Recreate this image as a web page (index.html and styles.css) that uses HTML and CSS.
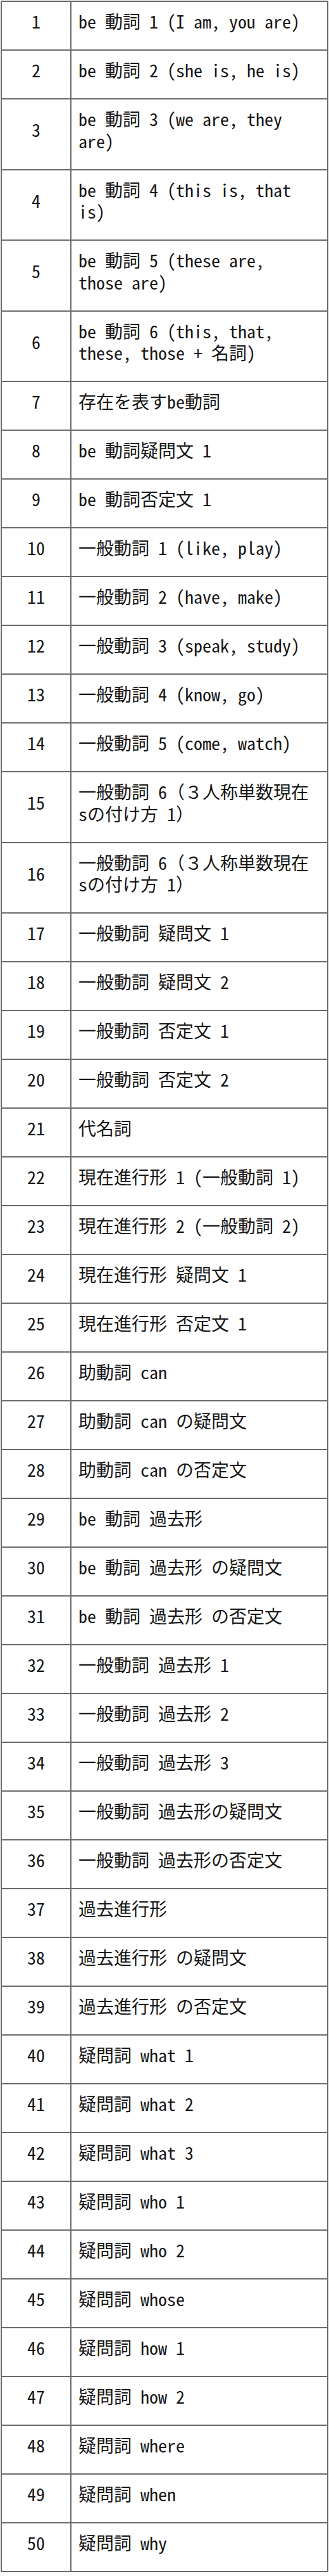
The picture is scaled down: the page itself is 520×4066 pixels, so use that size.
FILE: index.html
```html
<!DOCTYPE html>
<html lang="ja">
<head>
<meta charset="utf-8">
<title>中学英語 文法一覧</title>
<link rel="stylesheet" href="styles.css">
</head>
<body>
<div class="lessons">
  <div class="num">1</div><div class="title">be 動詞 1 (I am, you are)</div>
  <div class="num">2</div><div class="title">be 動詞 2 (she is, he is)</div>
  <div class="num">3</div><div class="title">be 動詞 3 (we are, they are)</div>
  <div class="num">4</div><div class="title">be 動詞 4 (this is, that is)</div>
  <div class="num">5</div><div class="title">be 動詞 5 (these are, those are)</div>
  <div class="num">6</div><div class="title">be 動詞 6 (this, that, these, those + 名詞)</div>
  <div class="num">7</div><div class="title">存在を表すbe動詞</div>
  <div class="num">8</div><div class="title">be 動詞疑問文 1</div>
  <div class="num">9</div><div class="title">be 動詞否定文 1</div>
  <div class="num">10</div><div class="title">一般動詞 1 (like, play)</div>
  <div class="num">11</div><div class="title">一般動詞 2 (have, make)</div>
  <div class="num">12</div><div class="title">一般動詞 3 (speak, study)</div>
  <div class="num">13</div><div class="title">一般動詞 4 (know, go)</div>
  <div class="num">14</div><div class="title">一般動詞 5 (come, watch)</div>
  <div class="num">15</div><div class="title">一般動詞 6（３人称単数現在sの付け方 1）</div>
  <div class="num">16</div><div class="title">一般動詞 6（３人称単数現在sの付け方 1）</div>
  <div class="num">17</div><div class="title">一般動詞 疑問文 1</div>
  <div class="num">18</div><div class="title">一般動詞 疑問文 2</div>
  <div class="num">19</div><div class="title">一般動詞 否定文 1</div>
  <div class="num">20</div><div class="title">一般動詞 否定文 2</div>
  <div class="num">21</div><div class="title">代名詞</div>
  <div class="num">22</div><div class="title">現在進行形 1 (一般動詞 1)</div>
  <div class="num">23</div><div class="title">現在進行形 2 (一般動詞 2)</div>
  <div class="num">24</div><div class="title">現在進行形 疑問文 1</div>
  <div class="num">25</div><div class="title">現在進行形 否定文 1</div>
  <div class="num">26</div><div class="title">助動詞 can</div>
  <div class="num">27</div><div class="title">助動詞 can の疑問文</div>
  <div class="num">28</div><div class="title">助動詞 can の否定文</div>
  <div class="num">29</div><div class="title">be 動詞 過去形</div>
  <div class="num">30</div><div class="title">be 動詞 過去形 の疑問文</div>
  <div class="num">31</div><div class="title">be 動詞 過去形 の否定文</div>
  <div class="num">32</div><div class="title">一般動詞 過去形 1</div>
  <div class="num">33</div><div class="title">一般動詞 過去形 2</div>
  <div class="num">34</div><div class="title">一般動詞 過去形 3</div>
  <div class="num">35</div><div class="title">一般動詞 過去形の疑問文</div>
  <div class="num">36</div><div class="title">一般動詞 過去形の否定文</div>
  <div class="num">37</div><div class="title">過去進行形</div>
  <div class="num">38</div><div class="title">過去進行形 の疑問文</div>
  <div class="num">39</div><div class="title">過去進行形 の否定文</div>
  <div class="num">40</div><div class="title">疑問詞 what 1</div>
  <div class="num">41</div><div class="title">疑問詞 what 2</div>
  <div class="num">42</div><div class="title">疑問詞 what 3</div>
  <div class="num">43</div><div class="title">疑問詞 who 1</div>
  <div class="num">44</div><div class="title">疑問詞 who 2</div>
  <div class="num">45</div><div class="title">疑問詞 whose</div>
  <div class="num">46</div><div class="title">疑問詞 how 1</div>
  <div class="num">47</div><div class="title">疑問詞 how 2</div>
  <div class="num">48</div><div class="title">疑問詞 where</div>
  <div class="num">49</div><div class="title">疑問詞 when</div>
  <div class="num">50</div><div class="title">疑問詞 why</div>
</div>
</body>
</html>
```
FILE: styles.css
```css
html, body {
  margin: 0;
  padding: 0;
  background: #ffffff;
}

.lessons {
  display: grid;
  grid-template-columns: 110px 406px;
  margin: 1px 0 0 1px;
  width: 516px;
  border-top: 2px solid #6b6b6b;
  border-left: 2px solid #6b6b6b;
  font-family: "Noto Sans Mono CJK JP", "Noto Sans CJK JP", monospace;
  font-size: 28px;
  line-height: 34.5px;
  color: #161616;
}

.num,
.title {
  border-right: 2px solid #6b6b6b;
  border-bottom: 2px solid #6b6b6b;
  padding-top: 13px;
  padding-bottom: 27.5px;
}

.num {
  display: flex;
  align-items: center;
  justify-content: center;
}

.title {
  padding-left: 11px;
  padding-right: 23px;
}
```
